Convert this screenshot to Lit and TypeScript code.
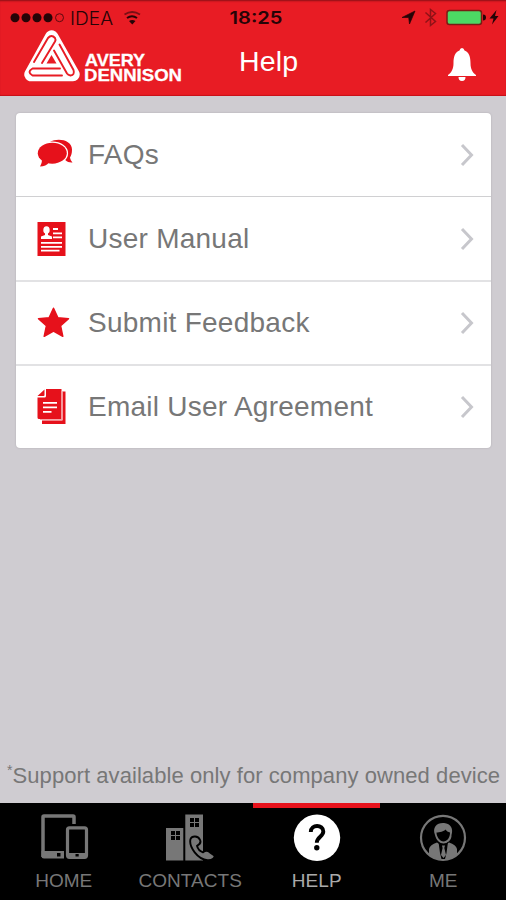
import { LitElement, html, css, svg } from "lit";
import { customElement } from "lit/decorators.js";

const icons: Record<string, unknown> = {
  faq: svg`<svg width="38" height="38" viewBox="0 0 38 38" fill="#e6111b">
    <path d="M14 6C21 1.500 36 3.500 36 13.500c0 4-.8 6-2 8 .5 2 1 3.500 2.500 5-3 .3-5-.6-7-2.200Z"/>
    <g stroke="#fff" stroke-width="2.600" stroke-linejoin="round" paint-order="stroke"><ellipse cx="16.300" cy="17.200" rx="14.500" ry="10.500"/></g><path d="M5.500 21c.8 4 .5 6-1.500 9.500 4 0 7-1.500 9-4Z"/></svg>`,
  manual: svg`<svg width="38" height="38" viewBox="0 0 38 38"><path fill="#e6111b" d="M1.500 2h28v34h-28z"/>
    <g fill="#fff"><ellipse cx="10.500" cy="10" rx="3.200" ry="3.800"/><path d="M9 12h3v3l4 1.500v2.500H5v-2.500L9 15Z"/>
    <path d="M17 8h5v2h-5zM17 12.500h9v1.800h-9zM17 16.500h9v1.800h-9zM5 22h21v1.800H5zM5 26h21v1.800H5zM5 29.800h18.500v1.700H5z"/></g></svg>`,
  star: svg`<svg width="38" height="38" viewBox="0 0 38 38"><path fill="#e6111b" stroke="#e6111b" stroke-width="1.500" stroke-linejoin="round" d="M17.500 4.300l4.400 9.500 10.600 1-7.900 7 2.200 10.500-9.300-5.300-9.300 5.300 2.200-10.500-7.900-7 10.600-1z"/></svg>`,
  docs: svg`<svg width="38" height="38" viewBox="0 0 38 38" fill="#e6111b"><path d="M10 1h15.500v30H3q-1.500 0-1.500-1.500V9.500H8.500Q10 9.500 10 8z"/><path d="M8.500 1.500V7q0 1-1 1H1.500z"/>
    <path d="M26.500 3.500h3V36H6v-3.500h20.500z"/><path d="M26 3v28.500H4" fill="none" stroke="#f6a5a8" stroke-width="1.100"/>
    <path stroke="#fff" stroke-width="1.700" d="M7 14.800h14M7 19.300h14M7 23.800h8.500"/></svg>`,
  home: svg`<svg width="50" height="50" viewBox="0 0 50 50" fill="none" stroke="#777">
    <path stroke-width="3.500" d="M35 11V4q0-1-1-1H5Q4 3 4 4v40"/><path fill="#777" stroke="none" d="M2.500 38H25v7.500H5Q2.500 45.500 2.500 43z"/>
    <rect x="28.500" y="14.800" width="19" height="29.500" rx="2" stroke-width="3.200"/><path fill="#777" stroke="none" d="M28 40h20v5H28z"/>
    <path fill="#000" stroke="none" d="M18 40h3.500v3.500H18zM36.500 41h3.200v2.500h-3.200z"/></svg>`,
  contacts: svg`<svg width="50" height="50" viewBox="0 0 50 50"><path fill="#777" d="M1 15h17.300v32.500H1zM20.300 1.500h17.700v46H20.300z"/>
    <path d="M6 18h4v4H6zM11 18h4v4h-4zM6 23h4v4H6zM11 23h4v4h-4zM25 5h4v4h-4zM30 5h4v4h-4zM25 10h4v4h-4zM30 10h4v4h-4z"/>
    <path fill="#777" stroke="#000" stroke-width="1.900" stroke-linejoin="round" d="M25.500 26c1.500-3.500 7.500-3.500 9.500.8 1.200 2.600-.5 4.800-3 6 .7 2.800 3.200 5.600 6 6.600 2-2 5-2 7 0l4 2.800c2 2-2 5.500-6.500 5C33 46.500 23.500 34 25.500 26z"/></svg>`,
  help: svg`<svg width="50" height="50" viewBox="0 0 50 50"><circle cx="25" cy="24.800" r="23.200" fill="#fff"/>
    <path fill="none" stroke="#000" stroke-width="3.900" d="M18.800 19c0-8 12.500-7.800 12.500-.5 0 5-6.500 5.500-6.500 11.200"/><circle cx="24.800" cy="34.800" r="2.700"/></svg>`,
  me: svg`<svg width="50" height="50" viewBox="0 0 50 50" fill="#777"><circle cx="25" cy="24.800" r="22" fill="none" stroke="#777" stroke-width="2.200"/>
    <path d="M17 22C14 14 19 9.500 26 10c7 .5 9.500 6 7.500 12C34 27 29 30.500 25.500 30.500S18 27 17 22Z"/><path fill="#000" d="M18.500 19.500c3 0 7.500-1 9-3 1 1.500 2.500 2.500 4.500 3 .2 5-3 9-6.500 9s-7-4.500-7-9Z"/>
    <path d="M11 42V36q1-4.500 8-6.500l6 4 6-4q7 2 8 6.500v6q-13 9-28 0Z"/><path fill="#000" d="M20.500 29l1.500 11 1.500 6h3.500l1.500-6 1.500-11-4.700 4z"/><path d="M24 32.500h3l-.7 2.500 1.700 7-2.500 3-2.500-3 1.600-7z"/></svg>`,
};

@customElement("app-root")
export class AppRoot extends LitElement {
  static styles = css`
    :host { display: flex; flex-direction: column; box-sizing: border-box; height: 900px; width: 506px; background: #cfccd1; font-family: "Liberation Sans", Arial, sans-serif; overflow: hidden; }
    svg { display: block; flex: none; }
    .header { height: 96px; flex: none; background: #e81c24; box-shadow: inset 0 2px 2px -1px #8a1016, inset 0 -2px 1px -1px #c71018; }
    .status { height: 30px; display: block; }
    .nav { height: 66px; display: grid; grid-template-columns: 24px 215px 1fr 60px; }
    .title { font-size: 28.500px; line-height: 33px; padding-top: 15px; letter-spacing: .2px; color: #fff; font-weight: 400; margin: 0; }
    .bell { padding-top: 17px; }
    .card { margin: 17px 15px 0 16px; background: #fff; border-radius: 4px; box-shadow: 0 0 2px #aaa8ac; }
    .row { display: flex; align-items: center; height: 84px; box-sizing: border-box; padding: 0 17px 1px 20px; border-top: 2px solid #e2e2e4; }
    .row:first-child { border-top: 0; height: 83px; padding-bottom: 0; }
    .row:nth-child(2) { border-top: 1px solid #d0d0d2; padding-bottom: 0; }
    .label { flex: 1; padding-left: 14px; font-size: 28px; letter-spacing: .25px; color: #777; white-space: nowrap; }
    .note { margin-top: auto; height: 41px; padding-left: 7px; display: flex; font-size: 22px; letter-spacing: .07px; line-height: 27px; color: #777; white-space: nowrap; }
    .star { font-size: 14px; line-height: 17px; }
    .tabs { height: 97px; flex: none; background: #000; display: grid; grid-template-columns: repeat(4, 1fr); }
    .tab { display: flex; flex-direction: column; align-items: center; box-sizing: border-box; padding: 5px 0 0 1px; border-top: 5px solid #000; color: #777; font-size: 19px; letter-spacing: .05px; line-height: 22px; }
    .tab.active { border-top-color: #e6111b; color: #aaa; }
    .name { margin-top: 7px; }
  `;

  render() {
    const rows = [["faq", "FAQs"], ["manual", "User Manual"], ["star", "Submit Feedback"], ["docs", "Email User Agreement"]];
    const tabs = [["home", "HOME"], ["contacts", "CONTACTS"], ["help", "HELP"], ["me", "ME"]];
    return html`
      <header class="header">
        <svg class="status" width="506" height="30" fill="#260407" font-family="Inter, sans-serif">
          <circle cx="15" cy="17.700" r="4.500"/><circle cx="26" cy="17.700" r="4.500"/><circle cx="37" cy="17.700" r="4.500"/><circle cx="48" cy="17.700" r="4.500"/>
          <circle cx="59.500" cy="17.700" r="4" fill="none" stroke="#5e090e"/>
          <text x="70" y="24.500" font-size="18" font-weight="300" textLength="43" lengthAdjust="spacingAndGlyphs">IDEA</text>
          <path d="M124.500 14.500q7.800-5 15.500 0" fill="none" stroke="#7a0f14" stroke-width="1.800"/><path d="M127 18q5-3.500 10 0" fill="none" stroke="#260407" stroke-width="2"/><path d="M129 21q3.200-2 6.500 0l-3.200 3.500z"/>
          <text x="229.500" y="24.300" font-size="17.500" font-weight="600" textLength="53" lengthAdjust="spacingAndGlyphs">18:25</text>
          <path d="M402 17.500l13-6.500-5.500 13-.8-6.500z" stroke="#260407" stroke-width=".7"/>
          <path d="M425.500 12.500l10 9-5 4V9.500l5 4-10 9" fill="none" stroke="#8f1217" stroke-width="1.500"/>
          <rect x="447" y="10.500" width="34.500" height="14" rx="2.500" fill="#4cd964" stroke="#7b1b14" stroke-width="1.500"/><path d="M483 14.500q3 0 3 3t-3 3z"/>
          <path d="M496.500 10l-7 8.500h4l-1.500 6 6.500-8.500h-3.500z"/>
        </svg>
        <div class="nav">
          <span></span>
          <svg width="162" height="56" viewBox="24 30 162 56" font-family="Liberation Sans, sans-serif">
            <path d="M51.700 37L31 74.500H73z" fill="#fff" stroke="#fff" stroke-width="13.500" stroke-linejoin="round"/>
            <g fill="none" stroke="#e81c24" stroke-width="1.900" stroke-linejoin="round" stroke-linecap="round">
              <path d="M34 62L48 38Q51.500 34 55 38Q56 39.500 55 41.500L42 63"/><path d="M59.500 44.500L73.500 70Q75 75 70.500 75.500Q68 75 67 73.500L54 50.500"/><path d="M62 75.500H32.500Q26.500 72 32.500 68.500H60"/>
            </g>
            <path d="M51.500 55l5 8.500H46.500z" fill="#e81c24"/>
            <g fill="#fff" stroke="#fff" stroke-width=".3" font-weight="700" font-size="16.500"><text x="85" y="66" textLength="60" lengthAdjust="spacingAndGlyphs">AVERY</text><text x="84" y="81" textLength="98" lengthAdjust="spacingAndGlyphs">DENNISON</text></g>
          </svg>
          <h1 class="title">Help</h1>
          <svg class="bell" width="32" height="36" viewBox="0 0 32 36" fill="#fff"><path d="M16 1q2 0 2.500 2.500C23 5 24.500 10 24.500 16c0 6 2 9.500 5.500 12v1H2v-1C5.500 25.500 7.500 22 7.500 16c0-6 1.500-11 6-12.500Q14 1 16 1zM12.500 30h7q0 4-3.500 4t-3.500-4z"/></svg>
        </div>
      </header>
      <main class="card">
        ${rows.map(([icon, label]) => html`<div class="row">${icons[icon]}<span class="label">${label}</span>
          <svg width="14" height="24" viewBox="0 0 14 24" fill="none" stroke="#c7c7cc" stroke-width="3"><path d="M2 2l9.500 10L2 22"/></svg></div>`)}
      </main>
      <div class="note"><span class="star">*</span><span>Support available only for company owned device</span></div>
      <nav class="tabs">
        ${tabs.map(([icon, label]) => html`<div class="tab ${icon === "help" ? "active" : ""}">${icons[icon]}<span class="name">${label}</span></div>`)}
      </nav>`;
  }
}
